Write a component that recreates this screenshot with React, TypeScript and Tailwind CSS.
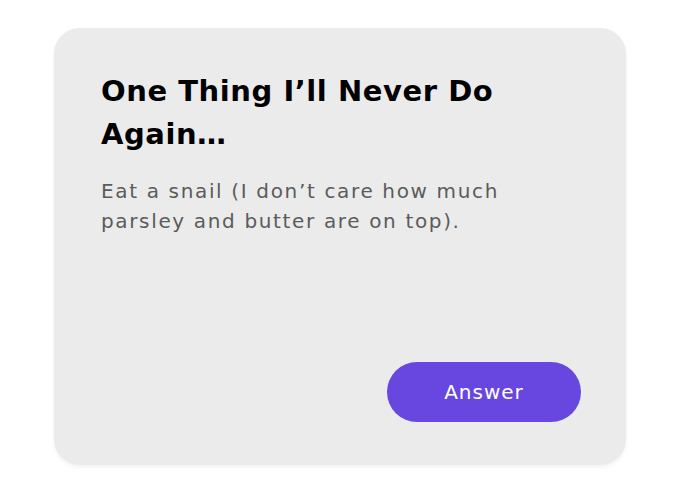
export default function App() {
  return (
    <div className="flex h-[492px] w-[680px] items-center justify-center bg-white" style={{ fontFamily: '"DejaVu Sans", sans-serif' }}>
      <div className="flex h-[437px] w-[572px] flex-col rounded-[26px] bg-[#ebebeb] pb-[43px] pl-[47px] pr-[45px] pt-[42px] shadow-[0_2px_4px_rgba(0,0,0,0.06)]">
        <h1 className="text-[29px] font-bold leading-[43px] tracking-[0.55px] text-black">
          One Thing I’ll Never Do Again…
        </h1>
        <p className="mt-[20px] max-w-[410px] text-[20px] leading-[30px] tracking-[1.65px] text-[#5b5b5b]">
          Eat a snail (I don’t care how much parsley and butter are on top).
        </p>
        <button className="mt-auto h-[60px] w-[194px] self-end rounded-full bg-[#6747e0] text-[20px] font-medium tracking-[1px] text-white">
          Answer
        </button>
      </div>
    </div>
  )
}
